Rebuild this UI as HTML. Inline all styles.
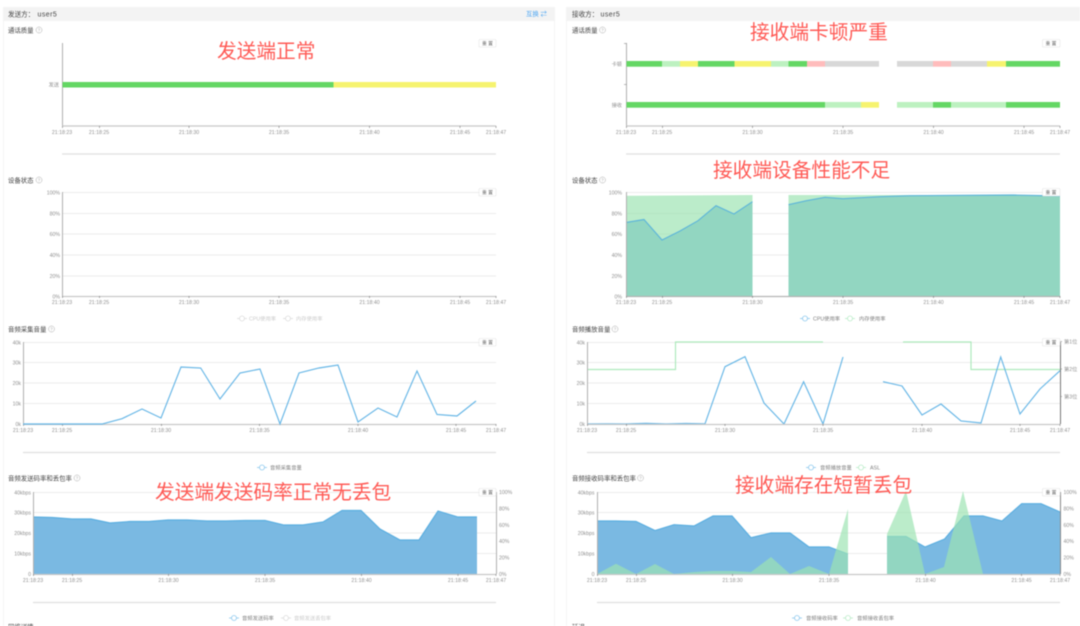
<!DOCTYPE html>
<html lang="zh">
<head>
<meta charset="utf-8">
<title>通话质量</title>
<style>
html,body{margin:0;padding:0;background:#fff;width:1080px;height:626px;overflow:hidden}
svg{display:block;filter:blur(.4px)}
text{font-family:"Liberation Sans","Noto Sans CJK SC",sans-serif}
.t{font-size:5.2px;fill:#909090;text-anchor:middle}
.y{font-size:5.2px;fill:#909090;text-anchor:end}
.r{font-size:5.2px;fill:#909090}
.h{font-size:6.6px;fill:#444}
.u{font-size:7px;fill:#444;letter-spacing:.45px}
.ti{font-size:6.4px;fill:#444}
.l{font-size:5.3px;fill:#808080}
.ld{font-size:5.3px;fill:#ccc}
.b{font-size:4.8px;fill:#666;text-anchor:middle}
.a{font-size:19.7px;fill:#ff5a55;font-family:"Liberation Sans","Noto Sans CJK SC",sans-serif}
.g{stroke:#e6e6e6;stroke-width:.8;fill:none}
.ax{stroke:#b0b0b0;stroke-width:1;fill:none}
.xa{stroke:#c8c8c8;stroke-width:1.3;fill:none}
.sl{stroke:#e0e0e0;stroke-width:1.3;fill:none}
.tk{stroke:#777;stroke-width:.6;fill:none}
.bl{fill:none;stroke:#66b6e6;stroke-width:1.15}
.ba{fill:#7ab9e2;stroke:none}
.ga{fill:#9de4b2;fill-opacity:.69;stroke:none}
.q{fill:none;stroke:#aaa;stroke-width:.5}
.qm{font-size:4.4px;fill:#aaa;text-anchor:middle}
.i1{stroke:#8cc8ee;stroke-width:.8;fill:#fff}
.i2{stroke:#b9ecc8;stroke-width:.8;fill:#fff}
.i3{stroke:#ddd;stroke-width:.8;fill:#fff}
.btn{fill:#fff;stroke:#e4e4e4;stroke-width:.6}
</style>
</head>
<body>
<svg width="1080" height="626" viewBox="0 0 1080 626" xmlns="http://www.w3.org/2000/svg">
<rect x="3.5" y="7.5" width="551" height="630" fill="#fff" stroke="#f5f5f5"/>
<rect x="566.5" y="7.5" width="530" height="630" fill="#fff" stroke="#f5f5f5"/>
<rect x="3" y="7" width="552" height="14" fill="#f3f3f3"/>
<rect x="566" y="7" width="514" height="14" fill="#f3f3f3"/>
<text class="h" x="8" y="16.3">发送方：</text><text class="u" x="37.500" y="16.500">user5</text>
<text x="526" y="16" style="font-size:6.4px;fill:#4da6f2">互换 ⇄</text>
<text class="h" x="572" y="16.3">接收方：</text><text class="u" x="600.500" y="16.500">user5</text>

<!-- LEFT 1 -->
<text class="ti" x="8" y="32.3">通话质量</text>
<circle class="q" cx="39" cy="30" r="3"/><text class="qm" x="39" y="31.600">?</text>
<path class="ax" d="M62.5 43V126"/>
<path class="xa" d="M62 126H496"/>
<path class="tk" d="M62.5 126v2M99.5 126v2M189 126v2M279 126v2M369.5 126v2M460 126v2M496 126v2"/>
<text class="y" x="59" y="86.3">发送</text>
<rect x="62.5" y="82" width="271" height="5.5" fill="#64d764"/>
<rect x="333.5" y="82" width="162.500" height="5.5" fill="#f6f36f"/>
<text class="t" x="62" y="133.800">21:18:23</text><text class="t" x="99" y="133.800">21:18:25</text><text class="t" x="189" y="133.800">21:18:30</text><text class="t" x="279" y="133.800">21:18:35</text><text class="t" x="369.500" y="133.800">21:18:40</text><text class="t" x="460" y="133.800">21:18:45</text><text class="t" x="496" y="133.800">21:18:47</text>
<path class="sl" d="M62 154H496"/>
<rect class="btn" x="479" y="39.500" width="17" height="7.500" rx="1"/><text class="b" x="487.500" y="45">重 置</text>

<!-- LEFT 2 -->
<text class="ti" x="8" y="182.300">设备状态</text>
<circle class="q" cx="39" cy="180" r="3"/><text class="qm" x="39" y="181.600">?</text>
<path class="g" d="M62 192.500H496M62 213.500H496M62 234H496M62 255H496M62 276H496"/>
<path class="ax" d="M62.500 192V296"/>
<path class="xa" d="M62 296.500H496"/>
<path class="tk" d="M62.500 296v2M99.500 296v2M189 296v2M279 296v2M369.500 296v2M460 296v2M496 296v2"/>
<text class="y" x="60" y="194.300">100%</text><text class="y" x="60" y="215.300">80%</text><text class="y" x="60" y="236">60%</text><text class="y" x="60" y="257">40%</text><text class="y" x="60" y="278">20%</text><text class="y" x="60" y="298.300">0%</text>
<text class="t" x="62" y="304">21:18:23</text><text class="t" x="99" y="304">21:18:25</text><text class="t" x="189" y="304">21:18:30</text><text class="t" x="279" y="304">21:18:35</text><text class="t" x="369.500" y="304">21:18:40</text><text class="t" x="460" y="304">21:18:45</text><text class="t" x="496" y="304">21:18:47</text>
<rect class="btn" x="479" y="188.500" width="17" height="7.500" rx="1"/><text class="b" x="487.500" y="194">重 置</text>
<path class="i3" d="M237 318.500h10"/><circle class="i3" cx="242" cy="318.500" r="2.500"/><text class="ld" x="249" y="320.500">CPU使用率</text>
<path class="i3" d="M283 318.500h10"/><circle class="i3" cx="288" cy="318.500" r="2.500"/><text class="ld" x="296" y="320.500">内存使用率</text>

<!-- LEFT 3 -->
<text class="ti" x="8" y="331.300">音频采集音量</text>
<circle class="q" cx="51.500" cy="329" r="3"/><text class="qm" x="51.500" y="330.600">?</text>
<path class="g" d="M23 342.500H496M23 362.500H496M23 383H496M23 403.500H496"/>
<path class="ax" d="M23.500 342V424"/>
<path class="xa" d="M23 424.500H496"/>
<path class="tk" d="M23.500 424v2M62.500 424v2M161.500 424v2M259.500 424v2M358 424v2M456 424v2M496 424v2"/>
<text class="y" x="21" y="344.300">40k</text><text class="y" x="21" y="364.300">30k</text><text class="y" x="21" y="385">20k</text><text class="y" x="21" y="405.300">10k</text><text class="y" x="21" y="426">0k</text>
<polyline class="bl" points="23,424 43,424 62,424 82,424 102,424 122,418.700 142,409 161,418 181,367 200.700,368 220,399 240,373 260,369 280,424 299,373 319,368 338,365 358,422 378,408 397,417 417,371 437,414.500 457,416 476,401"/>
<text class="t" x="23" y="431.800">21:18:23</text><text class="t" x="62" y="431.800">21:18:25</text><text class="t" x="161" y="431.800">21:18:30</text><text class="t" x="259.500" y="431.800">21:18:35</text><text class="t" x="358" y="431.800">21:18:40</text><text class="t" x="456" y="431.800">21:18:45</text><text class="t" x="496" y="431.800">21:18:47</text>
<path class="sl" d="M23 452.500H496"/>
<rect class="btn" x="479" y="338.500" width="17" height="7.500" rx="1"/><text class="b" x="487.500" y="344">重 置</text>
<path class="i1" d="M257 467.500h10"/><circle class="i1" cx="262" cy="467.500" r="2.500"/><text class="l" x="270" y="469.500">音频采集音量</text>

<!-- LEFT 4 -->
<text class="ti" x="8" y="480.300">音频发送码率和丢包率</text>
<circle class="q" cx="77" cy="478" r="3"/><text class="qm" x="77" y="479.600">?</text>
<path class="g" d="M33 492.500H496M33 512.500H496M33 533H496M33 553.500H496"/>
<polygon class="ba" points="33,517 52,517.500 72,519 91,519 110,523 130,521.500 149,521.500 168,520 187,520 207,521 226,521 245,520.500 265,520.500 284,525 303,525 323,522 342,510.500 361,510.500 380,529 400,540 419,540 438,511 458,517 477,517 477,574 33,574"/>
<polyline class="bl" style="stroke:#5aaee0" points="33,517 52,517.500 72,519 91,519 110,523 130,521.500 149,521.500 168,520 187,520 207,521 226,521 245,520.500 265,520.500 284,525 303,525 323,522 342,510.500 361,510.500 380,529 400,540 419,540 438,511 458,517 477,517"/>
<path class="ax" d="M33.500 492V574M496.500 492V574"/>
<path class="xa" d="M33 574.500H496"/>
<path class="tk" d="M33.500 574v2M72.500 574v2M168.500 574v2M265 574v2M361.500 574v2M458 574v2M496 574v2"/>
<text class="y" x="31" y="494.300">40kbps</text><text class="y" x="31" y="514.300">30kbps</text><text class="y" x="31" y="535">20kbps</text><text class="y" x="31" y="555.300">10kbps</text><text class="y" x="31" y="576">0</text>
<text class="r" x="499" y="494">100%</text><text class="r" x="499" y="510.500">80%</text><text class="r" x="499" y="527">60%</text><text class="r" x="499" y="543">40%</text><text class="r" x="499" y="559.500">20%</text><text class="r" x="499" y="576">0%</text>
<text class="t" x="33" y="581.800">21:18:23</text><text class="t" x="72" y="581.800">21:18:25</text><text class="t" x="168.500" y="581.800">21:18:30</text><text class="t" x="265" y="581.800">21:18:35</text><text class="t" x="361.500" y="581.800">21:18:40</text><text class="t" x="458" y="581.800">21:18:45</text><text class="t" x="496" y="581.800">21:18:47</text>
<path class="sl" d="M33 602.500H496"/>
<rect class="btn" x="479" y="488.500" width="17" height="7.500" rx="1"/><text class="b" x="487.500" y="494">重 置</text>
<path class="i1" d="M229 618h10"/><circle class="i1" cx="234" cy="618" r="2.500"/><text class="l" x="242" y="620">音频发送码率</text>
<path class="i3" d="M281 618h10"/><circle class="i3" cx="286" cy="618" r="2.500"/><text class="ld" x="294" y="620">音频发送丢包率</text>
<text class="ti" x="8" y="629">网络详情</text>

<!-- RIGHT 1 -->
<text class="ti" x="572" y="32.300">通话质量</text>
<circle class="q" cx="602.500" cy="30" r="3"/><text class="qm" x="602.500" y="31.600">?</text>
<path class="ax" d="M626.500 43V126"/>
<path class="tk" d="M624 43.500h2.500M624 84.500h2.500"/>
<path class="xa" d="M626 126H1060"/>
<path class="tk" d="M626.500 126v2M662.500 126v2M752.500 126v2M843 126v2M933.500 126v2M1024 126v2M1060 126v2"/>
<text class="y" x="622" y="65.800">卡顿</text>
<text class="y" x="622" y="107">接收</text>
<rect x="626.500" y="61" width="35.500" height="5.700" fill="#64d764"/>
<rect x="662" y="61" width="18" height="5.700" fill="#bdf1c0"/>
<rect x="680" y="61" width="18" height="5.700" fill="#f6f36f"/>
<rect x="698" y="61" width="36.500" height="5.700" fill="#64d764"/>
<rect x="734.500" y="61" width="36.500" height="5.700" fill="#f6f36f"/>
<rect x="771" y="61" width="17.500" height="5.700" fill="#bdf1c0"/>
<rect x="788.500" y="61" width="18.500" height="5.700" fill="#64d764"/>
<rect x="807" y="61" width="18" height="5.700" fill="#ffbcbc"/>
<rect x="825" y="61" width="54" height="5.700" fill="#d8d8d8"/>
<rect x="897" y="61" width="36" height="5.700" fill="#d8d8d8"/>
<rect x="933" y="61" width="18" height="5.700" fill="#ffbcbc"/>
<rect x="951" y="61" width="36" height="5.700" fill="#d8d8d8"/>
<rect x="987" y="61" width="19" height="5.700" fill="#f6f36f"/>
<rect x="1006" y="61" width="54" height="5.700" fill="#64d764"/>
<rect x="626.500" y="102" width="198.500" height="5.700" fill="#64d764"/>
<rect x="825" y="102" width="36" height="5.700" fill="#bdf1c0"/>
<rect x="861" y="102" width="18" height="5.700" fill="#f6f36f"/>
<rect x="897" y="102" width="36" height="5.700" fill="#bdf1c0"/>
<rect x="933" y="102" width="18" height="5.700" fill="#64d764"/>
<rect x="951" y="102" width="55" height="5.700" fill="#bdf1c0"/>
<rect x="1006" y="102" width="54" height="5.700" fill="#64d764"/>
<text class="t" x="626" y="133.800">21:18:23</text><text class="t" x="662" y="133.800">21:18:25</text><text class="t" x="752.500" y="133.800">21:18:30</text><text class="t" x="843" y="133.800">21:18:35</text><text class="t" x="933.500" y="133.800">21:18:40</text><text class="t" x="1024" y="133.800">21:18:45</text><text class="t" x="1060" y="133.800">21:18:47</text>
<path class="sl" d="M626 154H1060"/>
<rect class="btn" x="1042.500" y="39.500" width="17.500" height="7.500" rx="1"/><text class="b" x="1051" y="45">重 置</text>

<!-- RIGHT 2 -->
<text class="ti" x="572" y="182.300">设备状态</text>
<circle class="q" cx="602.500" cy="180" r="3"/><text class="qm" x="602.500" y="181.600">?</text>
<path class="g" d="M626 192.500H1060M626 213.500H1060M626 234H1060M626 255H1060M626 276H1060"/>
<polygon class="ba" points="626,222.500 644,219.500 662,240 680,231 698,220.700 716,205.700 734,214 752.500,201.700 752.500,296 626,296"/>
<polygon class="ba" points="788.500,204.700 806.500,200.700 825,197.300 843,198.700 880,196.700 910,195.700 1013,195 1060,196 1060,296 788.500,296"/>
<polygon class="ga" points="626,195.800 752.500,195 752.500,296 626,296"/>
<polygon class="ga" points="788.500,195 1060,195 1060,296 788.500,296"/>
<polyline class="bl" style="stroke:#5db5da" points="626,222.500 644,219.500 662,240 680,231 698,220.700 716,205.700 734,214 752.500,201.700"/>
<polyline class="bl" style="stroke:#5db5da" points="788.500,204.700 806.500,200.700 825,197.300 843,198.700 880,196.700 910,195.700 1013,195 1060,196"/>
<path class="ax" d="M626.500 192V296"/>
<path class="xa" style="stroke:#b4b4b4" d="M626 296.500H1060"/>
<path class="tk" d="M626.500 296v2M662.500 296v2M752.500 296v2M843 296v2M933.500 296v2M1024 296v2M1060 296v2"/>
<text class="y" x="622" y="194.300">100%</text><text class="y" x="622" y="215.300">80%</text><text class="y" x="622" y="236">60%</text><text class="y" x="622" y="257">40%</text><text class="y" x="622" y="278">20%</text><text class="y" x="622" y="298.300">0%</text>
<text class="t" x="626" y="304">21:18:23</text><text class="t" x="662" y="304">21:18:25</text><text class="t" x="752.500" y="304">21:18:30</text><text class="t" x="843" y="304">21:18:35</text><text class="t" x="933.500" y="304">21:18:40</text><text class="t" x="1024" y="304">21:18:45</text><text class="t" x="1060" y="304">21:18:47</text>
<rect class="btn" x="1042.500" y="188.500" width="17.500" height="7.500" rx="1"/><text class="b" x="1051" y="194">重 置</text>
<path class="i1" d="M800 318.500h10"/><circle class="i1" cx="805" cy="318.500" r="2.500"/><text class="l" x="813" y="320.500">CPU使用率</text>
<path class="i2" d="M845 318.500h10"/><circle class="i2" cx="850" cy="318.500" r="2.500"/><text class="l" x="859" y="320.500">内存使用率</text>

<!-- RIGHT 3 -->
<text class="ti" x="572" y="331.300">音频播放音量</text>
<circle class="q" cx="615" cy="329" r="3"/><text class="qm" x="615" y="330.600">?</text>
<path class="g" d="M587 342.500H1060M587 362.500H1060M587 383H1060M587 403.500H1060"/>
<polyline fill="none" stroke="#aeeabd" stroke-width="1.2" points="587,369.500 675.500,369.500 675.500,342 823,342"/>
<polyline fill="none" stroke="#aeeabd" stroke-width="1.2" points="903,342 971,342 971,369.500 1060,369.500"/>
<polyline class="bl" points="587,424 607,423.800 626,424 646,423.300 666,424 686,423.400 705,423.800 725,366.700 745,356.700 764,403 784,424 803.600,381.700 823,424 843,357"/>
<polyline class="bl" points="883,381.700 902,386 922,415 941,404 961,421 981,423 1000.700,357 1020,414 1040,389 1060,370.700"/>
<path class="ax" d="M587.500 342V424"/>
<path class="ax" style="stroke:#777" d="M1060.500 342V424"/>
<path class="xa" d="M587 424.500H1060"/>
<path class="tk" d="M587.500 424v2M626.500 424v2M725 424v2M823 424v2M922 424v2M1020 424v2M1060 424v2M1060 341.500h2M1060 369h2M1060 396.500h2"/>
<text class="y" x="585" y="344.300">40k</text><text class="y" x="585" y="364.300">30k</text><text class="y" x="585" y="385">20k</text><text class="y" x="585" y="405.300">10k</text><text class="y" x="585" y="426">0k</text>
<text class="r" x="1064" y="343.500">第1位</text><text class="r" x="1064" y="371">第2位</text><text class="r" x="1064" y="398.500">第3位</text>
<text class="t" x="587" y="431.800">21:18:23</text><text class="t" x="626" y="431.800">21:18:25</text><text class="t" x="725" y="431.800">21:18:30</text><text class="t" x="823" y="431.800">21:18:35</text><text class="t" x="922" y="431.800">21:18:40</text><text class="t" x="1020" y="431.800">21:18:45</text><text class="t" x="1060" y="431.800">21:18:47</text>
<path class="sl" d="M587 452.500H1060"/>
<rect class="btn" x="1042.500" y="338.500" width="17.500" height="7.500" rx="1"/><text class="b" x="1051" y="344">重 置</text>
<path class="i1" d="M806 467.500h10"/><circle class="i1" cx="811" cy="467.500" r="2.500"/><text class="l" x="820" y="469.500">音频播放音量</text>
<path class="i2" d="M856 467.500h10"/><circle class="i2" cx="861" cy="467.500" r="2.500"/><text class="l" x="870" y="469.500">ASL</text>

<!-- RIGHT 4 -->
<text class="ti" x="572" y="480.300">音频接收码率和丢包率</text>
<circle class="q" cx="640.500" cy="478" r="3"/><text class="qm" x="640.500" y="479.600">?</text>
<path class="g" d="M597 492.500H1060M597 512.500H1060M597 533H1060M597 553.500H1060"/>
<polygon class="ba" points="597,521 616,521 636,521.500 655,530.500 674,524.700 694,526 713,516 732,516 751,537.700 771,533 790,533 809,547 829,547 848,554 848,574 597,574"/>
<polygon class="ba" points="887,536.500 906,536.500 925,547 944.600,539 964,516 983,516 1002,521 1021.700,503.700 1041,503.700 1060,512 1060,574 887,574"/>
<polyline class="bl" style="stroke:#5aaee0" points="597,521 616,521 636,521.500 655,530.500 674,524.700 694,526 713,516 732,516 751,537.700 771,533 790,533 809,547 829,547 848,554"/>
<polyline class="bl" style="stroke:#5aaee0" points="887,536.500 906,536.500 925,547 944.600,539 964,516 983,516 1002,521 1021.700,503.700 1041,503.700 1060,512"/>
<polygon class="ga" points="597,574 616,563.700 636,574 655,564 674,574 694,572 713,571 732,571 751,572 771,557 790,574 809,566 829,574 848,509 848,574"/>
<polygon class="ga" points="887,534 906,491 925,574 944,567 963,491 983,574 887,574"/>
<path class="ax" d="M597.500 492V574"/>
<path class="ax" style="stroke:#888" d="M1060.500 492V574"/>
<path class="xa" d="M597 574.500H1060"/>
<path class="tk" d="M597.500 574v2M636.500 574v2M732.500 574v2M829 574v2M925.500 574v2M1021.500 574v2M1060 574v2"/>
<text class="y" x="594.500" y="494.300">40kbps</text><text class="y" x="594.500" y="514.300">30kbps</text><text class="y" x="594.500" y="535">20kbps</text><text class="y" x="594.500" y="555.300">10kbps</text><text class="y" x="594.500" y="576">0</text>
<text class="r" x="1063.500" y="494">100%</text><text class="r" x="1063.500" y="510.500">80%</text><text class="r" x="1063.500" y="527">60%</text><text class="r" x="1063.500" y="543">40%</text><text class="r" x="1063.500" y="559.500">20%</text><text class="r" x="1063.500" y="576">0%</text>
<text class="t" x="597" y="581.800">21:18:23</text><text class="t" x="636" y="581.800">21:18:25</text><text class="t" x="732.500" y="581.800">21:18:30</text><text class="t" x="829" y="581.800">21:18:35</text><text class="t" x="925.500" y="581.800">21:18:40</text><text class="t" x="1021.500" y="581.800">21:18:45</text><text class="t" x="1060" y="581.800">21:18:47</text>
<path class="sl" d="M597 602.500H1060"/>
<rect class="btn" x="1042.500" y="488.500" width="17.500" height="7.500" rx="1"/><text class="b" x="1051" y="494">重 置</text>
<path class="i1" d="M792 618h10"/><circle class="i1" cx="797" cy="618" r="2.500"/><text class="l" x="806" y="620">音频接收码率</text>
<path class="i2" d="M843 618h10"/><circle class="i2" cx="848" cy="618" r="2.500"/><text class="l" x="857" y="620">音频接收丢包率</text>
<text class="ti" x="572" y="629">延迟</text>

<!-- annotations -->
<text class="a" x="217" y="58">发送端正常</text>
<text class="a" x="750" y="39">接收端卡顿严重</text>
<text class="a" x="713" y="177">接收端设备性能不足</text>
<text class="a" x="155" y="499">发送端发送码率正常无丢包</text>
<text class="a" x="735" y="492">接收端存在短暂丢包</text>
</svg>
</body>
</html>
